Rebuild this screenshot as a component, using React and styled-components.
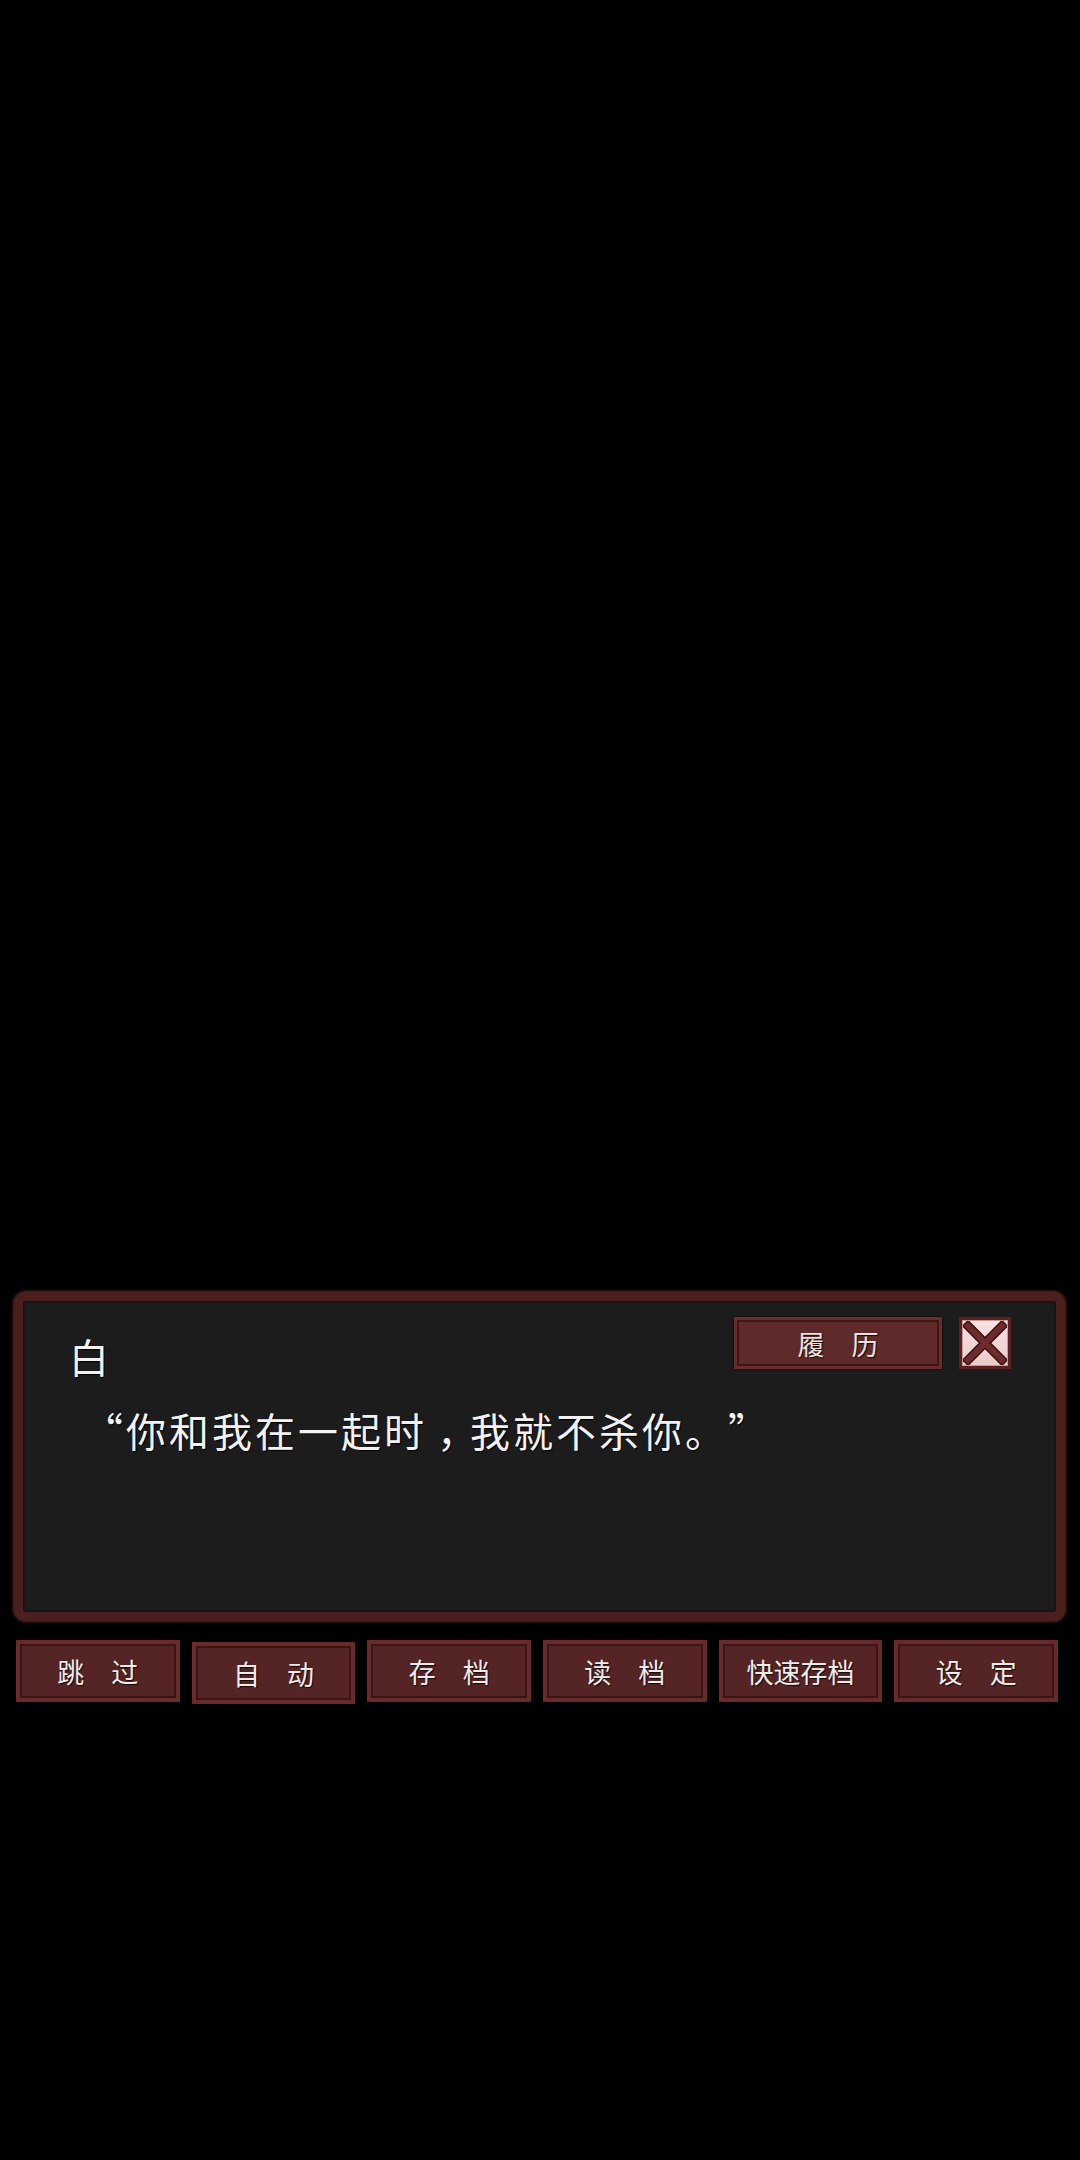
import React from 'react';
import styled, { createGlobalStyle } from 'styled-components';

const GlobalStyle = createGlobalStyle`
    html, body {
        margin: 0;
        padding: 0;
        background: #000;
    }
    body {
        font-family: "Noto Sans CJK SC", "Noto Sans", sans-serif;
        color: #f2f2f2;
    }
    * {
        box-sizing: border-box;
    }
`

const Screen = styled.div`
    width: 1080px;
    min-height: 2160px;
    background: #000;
    display: flex;
    flex-direction: column;
`

const Scene = styled.div`
    flex: 0 0 1292px;
`

const DialogPanel = styled.div`
    margin: 0 15px 0 14px;
    height: 329px;
    border: 9px solid #4c1f1f;
    border-radius: 12px;
    background: #1c1c1c;
    box-shadow: 0 0 3px 1px #5c2626, inset 0 0 3px #000;
    padding: 16px 45px 0 46px;
`

const Header = styled.div`
    display: flex;
    justify-content: space-between;
    align-items: flex-start;
`

const Name = styled.div`
    font-size: 40px;
    line-height: 1;
    margin-top: 19px;
    text-shadow: 1px 1px 1px #000;
`

const Actions = styled.div`
    display: flex;
    gap: 17px;
`

const HistoryButton = styled.div`
    width: 208px;
    height: 52px;
    border: 3px solid #6d2c2c;
    background: #5f2a2a;
    box-shadow: inset 0 0 0 2px #3e1616, 0 0 2px #000;
    display: flex;
    align-items: center;
    justify-content: center;
    font-size: 27px;
    color: #e4e4e4;
    text-shadow: 1px 1px 1px #1a0606;
`

const CloseButton = styled.div`
    width: 52px;
    height: 52px;
    border: 3px solid #5c2020;
    background: linear-gradient(180deg, #f7e2e2 0%, #eccaca 100%);
    box-shadow: inset 0 0 0 1px #c89a9a;
    display: flex;
    align-items: center;
    justify-content: center;
`

const Line = styled.div`
    margin-top: 34px;
    padding-left: 14px;
    font-size: 40px;
    line-height: 1;
    letter-spacing: 3px;
    text-spacing-trim: space-all;
    text-shadow: 1px 1px 1px #000;
`

/* comma sits centred in its own full-width cell */
const Punct = styled.span`
    display: inline-block;
    width: 1em;
    margin-right: 3px;
    text-align: center;
    letter-spacing: 0;
    font-feature-settings: "halt" 1;
`

const ButtonBar = styled.div`
    margin-top: 19px;
    padding: 0 22px 0 16px;
    display: grid;
    grid-template-columns: repeat(6, 1fr);
    gap: 12px;
    align-items: start;
`

const MenuButton = styled.div`
    height: 62px;
    margin-top: ${(p) => (p.$pressed ? '2px' : '0')};
    border: 4px solid #682a2a;
    background: #552424;
    box-shadow: inset 0 0 0 2px #3b1414, 0 0 2px #000;
    display: flex;
    align-items: center;
    justify-content: center;
    font-size: 27px;
    color: #ececec;
    text-shadow: 1px 1px 1px #1a0505;
`

const menu = [
    { label: '跳　过' },
    { label: '自　动', pressed: true },
    { label: '存　档' },
    { label: '读　档' },
    { label: '快速存档' },
    { label: '设　定' },
]

function CrossIcon() {
    return (
        <svg width="44" height="44" viewBox="0 0 44 44">
            <g strokeLinecap="square">
                <line x1="5" y1="5" x2="39" y2="39" stroke="#3a1010" strokeWidth="9" />
                <line x1="39" y1="5" x2="5" y2="39" stroke="#3a1010" strokeWidth="9" />
                <line x1="5" y1="5" x2="39" y2="39" stroke="#6e2b2b" strokeWidth="6" />
                <line x1="39" y1="5" x2="5" y2="39" stroke="#6e2b2b" strokeWidth="6" />
            </g>
        </svg>
    )
}

function App() {
    return <Screen>
        <GlobalStyle />
        <Scene />
        <DialogPanel>
            <Header>
                <Name>白</Name>
                <Actions>
                    <HistoryButton>履　历</HistoryButton>
                    <CloseButton><CrossIcon /></CloseButton>
                </Actions>
            </Header>
            <Line>“你和我在一起时<Punct>，</Punct>我就不杀你。”</Line>
        </DialogPanel>
        <ButtonBar>
            {menu.map((item) => (
                <MenuButton key={item.label} $pressed={item.pressed}>{item.label}</MenuButton>
            ))}
        </ButtonBar>
    </Screen>
}

export default App;
